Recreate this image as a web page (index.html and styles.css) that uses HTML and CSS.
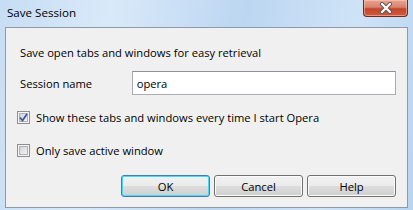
FILE: index.html
```html
<!DOCTYPE html>
<html lang="en">
<head>
    <meta charset="UTF-8">
    <title>Save Session</title>
    <link rel="stylesheet" href="styles.css">
</head>
<body>
    <div class="window">
        <div class="titlebar">
            <span class="title">Save Session</span>
            <div class="close-btn">
                <svg width="16" height="12" viewBox="0 0 16 12">
                    <path d="M4 2 L12 10 M12 2 L4 10" stroke="#5a5a5a" stroke-width="4" stroke-linecap="round"/>
                    <path d="M4 2 L12 10 M12 2 L4 10" stroke="#ffffff" stroke-width="2.2" stroke-linecap="round"/>
                </svg>
            </div>
        </div>

        <div class="client">
            <p class="intro">Save open tabs and windows for easy retrieval</p>

            <div class="name-row">
                <label class="name-label" for="session-name">Session name</label>
                <input class="name-input" id="session-name" type="text" value="opera">
            </div>

            <!-- Checkboxes -->
            <div class="check-row first">
                <span class="checkbox checked">
                    <svg width="9" height="9" viewBox="0 0 9 9">
                        <path d="M1 4.5 L3.5 7.5 L8 1" fill="none" stroke="#3d5a9c" stroke-width="1.8"/>
                    </svg>
                </span>
                <span>Show these tabs and windows every time I start Opera</span>
            </div>
            <div class="check-row second">
                <span class="checkbox"></span>
                <span>Only save active window</span>
            </div>

            <div class="buttons">
                <button class="default">OK</button>
                <button>Cancel</button>
                <button>Help</button>
            </div>
        </div>
    </div>
</body>
</html>
```

FILE: styles.css
```css
body {
    margin: 0;
    font-family: "Open Sans", "Noto Sans", sans-serif;
    font-size: 11.2px;
    color: #000;
}

.window {
    width: 413px;
    height: 210px;
    box-sizing: border-box;
    background: linear-gradient(100deg, #c6ddf4 0%, #d9e9f9 25%, #bcd6f1 55%, #cfe3f7 80%, #b9d4f0 100%);
    display: flex;
    flex-direction: column;
}

.titlebar {
    height: 27px;
    display: flex;
    justify-content: space-between;
    align-items: flex-start;
    padding: 0 5px 0 7px;
}

.title {
    margin-top: 5px;
    font-size: 11.6px;
    line-height: 16px;
}

.close-btn {
    width: 45px;
    height: 17px;
    box-sizing: border-box;
    border: 1px solid #6e2a22;
    border-top: none;
    border-radius: 0 0 4px 4px;
    background: linear-gradient(#e9a594 0%, #d9826c 45%, #c4452d 55%, #cf5a3c 100%);
    box-shadow: inset 0 0 0 1px rgba(255, 210, 190, 0.5);
    display: flex;
    justify-content: center;
    align-items: center;
}

.client {
    flex: 1;
    margin: 0 5px 2px 5px;
    border: 1px solid #8e9aa8;
    background: #f0f0f0;
    padding: 17px 11px 0 14px;
    display: flex;
    flex-direction: column;
}

.intro {
    margin: 0;
    line-height: 16px;
}

.name-row {
    display: flex;
    align-items: center;
    margin-top: 10px;
    height: 24px;
}

.name-label {
    width: 112px;
}

.name-input {
    width: 265px;
    height: 24px;
    box-sizing: border-box;
    border: 1px solid #abadb3;
    border-top-color: #8f9299;
    padding: 0 4px;
    font-family: inherit;
    font-size: 11.2px;
    color: #000;
    background: #fff;
    outline: none;
}

.check-row {
    display: flex;
    align-items: center;
    height: 13px;
    margin-left: -3px;
    gap: 6px;
}

.check-row.first {
    margin-top: 16px;
}

.check-row.second {
    margin-top: 20px;
}

.checkbox {
    width: 13px;
    height: 13px;
    box-sizing: border-box;
    border: 1px solid #8f8f8f;
    box-shadow: inset 0 0 0 1px #f4f4f4, inset 0 0 0 2px #aeb3b9;
    background-image: linear-gradient(135deg, #d3d6da 20%, #f6f6f6 90%);
    display: flex;
    justify-content: center;
    align-items: center;
}

.buttons {
    display: flex;
    justify-content: flex-end;
    gap: 4px;
    margin-top: 18px;
}

.buttons button {
    width: 89px;
    height: 22px;
    border: 1px solid #707070;
    border-radius: 3px;
    background: linear-gradient(#f2f2f2 0%, #ebebeb 48%, #dddddd 52%, #cfcfcf 100%);
    box-shadow: inset 0 0 0 1px #fcfcfc;
    font-family: inherit;
    font-size: 11.2px;
    color: #000;
    padding: 0;
}

.buttons button.default {
    border-color: #3c7fb1;
    box-shadow: inset 0 0 0 1px #48d8fb;
}
```
